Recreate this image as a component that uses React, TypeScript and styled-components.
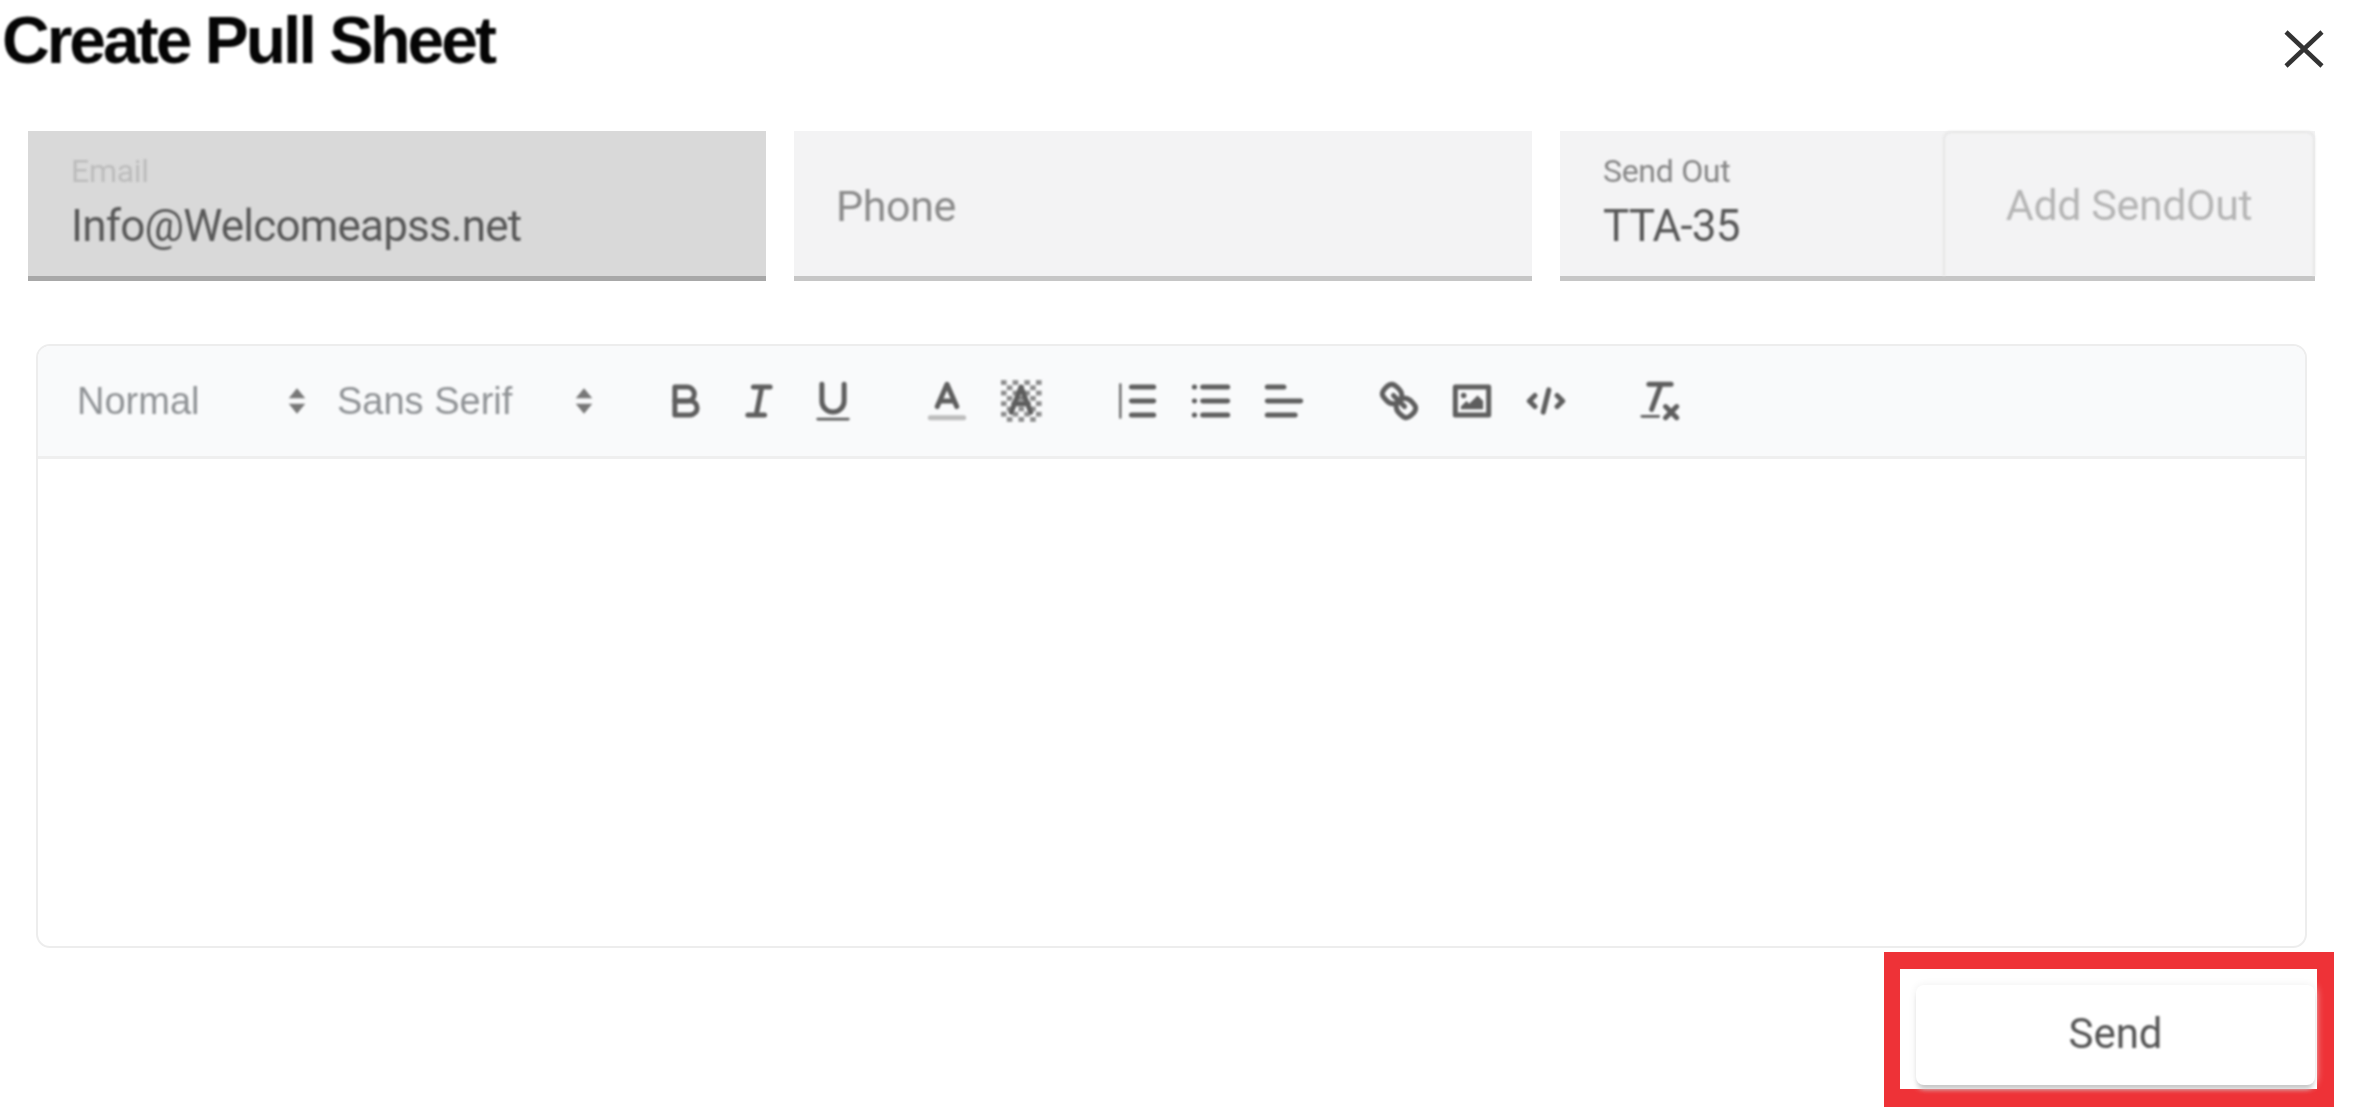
import styled, { createGlobalStyle } from 'styled-components';

const GlobalStyle = createGlobalStyle`
  html, body {
    margin: 0;
    padding: 0;
    background: #fff;
  }
`;

const Page = styled.div`
  width: 2359px;
  height: 1107px;
  overflow: hidden;
  background: #fff;
  font-family: Roboto, sans-serif;
`;

const Header = styled.div`
  height: 131px;
  display: flex;
  justify-content: space-between;
  align-items: flex-start;
  padding: 0 35px 0 2px;
  box-sizing: border-box;
`;

const Title = styled.h1`
  margin: 6px 0 0;
  font-family: 'Liberation Sans', Arial, sans-serif;
  font-size: 66px;
  line-height: 68px;
  letter-spacing: -3px;
  font-weight: 700;
  color: #050505;
  filter: blur(0.9px);
`;

const CloseButton = styled.div`
  margin-top: 30px;
  width: 40px;
  height: 38px;
  color: #333;
  filter: blur(0.7px);
`;

const FieldRow = styled.div`
  display: flex;
  gap: 28px;
  padding-left: 28px;
`;

const Field = styled.div<{ $width: number; $disabled?: boolean }>`
  width: ${(p) => p.$width}px;
  height: 150px;
  box-sizing: border-box;
  display: flex;
  background: ${(p) => (p.$disabled ? '#d9d9d9' : '#f3f3f4')};
  border-bottom: 5px solid ${(p) => (p.$disabled ? '#a8a8a8' : '#c6c6c6')};
`;

const FieldBody = styled.div<{ $inset: number }>`
  flex: 1;
  min-width: 0;
  display: flex;
  flex-direction: column;
  justify-content: center;
  padding-left: ${(p) => p.$inset}px;
  filter: blur(1px);
`;

const FieldLabel = styled.div<{ $faded?: boolean }>`
  font-size: 32px;
  line-height: 36px;
  margin-top: -4px;
  letter-spacing: -0.3px;
  color: ${(p) => (p.$faded ? '#bcbcbc' : '#858585')};
`;

const FieldValue = styled.div`
  font-size: 44px;
  line-height: 50px;
  margin-top: 12px;
  letter-spacing: -0.8px;
  color: #585858;
`;

const Placeholder = styled.div`
  font-size: 43px;
  line-height: 50px;
  margin-top: 4px;
  letter-spacing: -0.4px;
  color: #8b8b8b;
`;

const AddButton = styled.div`
  width: 372px;
  box-sizing: border-box;
  border: 2px solid #e6e6e6;
  border-bottom: none;
  border-radius: 8px 8px 0 0;
  display: flex;
  align-items: center;
  justify-content: center;
  font-size: 43px;
  letter-spacing: -0.4px;
  color: #b5b5b5;
  filter: blur(0.9px);
`;

const Editor = styled.div`
  width: 2271px;
  height: 604px;
  margin: 63px 0 0 36px;
  box-sizing: border-box;
  border: 2px solid #ededed;
  border-radius: 14px;
  overflow: hidden;
`;

const Toolbar = styled.div`
  height: 113px;
  box-sizing: border-box;
  display: flex;
  align-items: center;
  padding-left: 39px;
  background: #f9fafb;
  border-bottom: 3px solid #efefef;
  color: #666;
`;

const Picker = styled.div<{ $width: number; $after: number }>`
  width: ${(p) => p.$width}px;
  margin-right: ${(p) => p.$after}px;
  display: flex;
  justify-content: space-between;
  align-items: center;
  font-family: 'Liberation Sans', Arial, sans-serif;
  font-size: 38px;
  color: #8f9295;
  filter: blur(1px);

  svg {
    width: 22px;
    height: 30px;
    color: #777;
  }
`;

const Group = styled.div<{ $after?: number }>`
  display: flex;
  margin-right: ${(p) => p.$after ?? 43}px;
  filter: blur(1.1px);
`;

const ToolButton = styled.div`
  width: 73.5px;
  height: 73px;
  display: flex;
  align-items: center;
  justify-content: center;

  svg {
    width: 50px;
    height: 50px;
    fill: none;
    stroke: #5e5e5e;
    stroke-width: 1.8;
    stroke-linecap: round;
    stroke-linejoin: round;
  }
  .fill {
    fill: #5e5e5e;
    stroke: none;
  }
  .faint {
    stroke: #bdbdbd;
  }
`;

const Footer = styled.div`
  display: flex;
  justify-content: flex-end;
  margin-top: 4px;
  padding-right: 25px;
`;

const Highlight = styled.div`
  width: 450px;
  height: 155px;
  box-sizing: border-box;
  border: solid #ee3237;
  border-width: 17px 17px 18px 16px;
  display: flex;
  justify-content: flex-end;
  align-items: flex-end;
`;

const SendButton = styled.div`
  width: 399px;
  height: 100px;
  margin-right: 2px;
  margin-bottom: 4px;
  box-sizing: border-box;
  display: flex;
  align-items: center;
  justify-content: center;
  padding-bottom: 3px;
  background: #fff;
  border-radius: 8px;
  box-shadow: 0 6px 5px -2px #c6c6c6, 0 0 8px #efefef;
  font-size: 42px;
  color: #555;

  span {
    filter: blur(0.9px);
  }
`;

const PickerArrows = () => (
  <svg viewBox="0 0 12 16">
    <path d="M6 1 10.5 6.5H1.5Z M6 15 1.5 9.5H10.5Z" fill="currentColor" />
  </svg>
);

// the background-colour swatch in the toolbar is a speckled block behind the letter
const speckles = Array.from({ length: 56 }, (_, i) => {
  const col = i % 7;
  const row = Math.floor(i / 7);
  return { x: 1.8 + col * 2.1, y: 1.5 + row * 1.9, on: (col + row) % 2 === 0 };
});

const App = () => {
  return (
    <Page>
      <GlobalStyle />
      <Header>
        <Title>Create Pull Sheet</Title>
        <CloseButton>
          <svg width="40" height="38" viewBox="0 0 40 38">
            <path d="M2 2 38 36 M38 2 2 36" stroke="currentColor" strokeWidth="4.5" fill="none" />
          </svg>
        </CloseButton>
      </Header>

      <FieldRow>
        <Field $width={738} $disabled>
          <FieldBody $inset={43}>
            <FieldLabel $faded>Email</FieldLabel>
            <FieldValue>Info@Welcomeapss.net</FieldValue>
          </FieldBody>
        </Field>
        <Field $width={738}>
          <FieldBody $inset={42}>
            <Placeholder>Phone</Placeholder>
          </FieldBody>
        </Field>
        <Field $width={755}>
          <FieldBody $inset={43}>
            <FieldLabel>Send Out</FieldLabel>
            <FieldValue>TTA-35</FieldValue>
          </FieldBody>
          <AddButton>Add SendOut</AddButton>
        </Field>
      </FieldRow>

      <Editor>
        <Toolbar>
          <Picker $width={231} $after={29}>
            Normal
            <PickerArrows />
          </Picker>
          <Picker $width={258} $after={54}>
            Sans Serif
            <PickerArrows />
          </Picker>
          <Group $after={41}>
            <ToolButton>
              <svg viewBox="0 0 18 18">
                <path d="M5,4H9.5A2.5,2.5,0,0,1,12,6.5v0A2.5,2.5,0,0,1,9.5,9H5V4Z" />
                <path d="M5,9h5.5A2.5,2.5,0,0,1,13,11.5v0A2.5,2.5,0,0,1,10.5,14H5V9Z" />
              </svg>
            </ToolButton>
            <ToolButton>
              <svg viewBox="0 0 18 18">
                <path d="M7 4H13 M5 14H11 M8 14 10 4" />
              </svg>
            </ToolButton>
            <ToolButton>
              <svg viewBox="0 0 18 18">
                <path d="M5,3V9a4,4,0,0,0,4,4H9a4,4,0,0,0,4-4V3" />
                <rect className="fill" height="1" rx=".5" ry=".5" width="12" x="3" y="15" />
              </svg>
            </ToolButton>
          </Group>
          <Group>
            <ToolButton>
              <svg viewBox="0 0 18 18">
                <path className="faint" d="M3 15H15" />
                <path d="M5.5 11 9 3 12.5 11 M11.63 9H6.38" />
              </svg>
            </ToolButton>
            <ToolButton>
              <svg viewBox="0 0 18 18">
                {speckles.map((s) =>
                  s.on ? (
                    <rect key={`${s.x}-${s.y}`} className="fill" x={s.x} y={s.y} width="2" height="1.7" opacity="0.7" />
                  ) : null,
                )}
                <path d="M5.5 13 9 4 12.5 13 M11.63 10H6.38" />
              </svg>
            </ToolButton>
          </Group>
          <Group $after={41}>
            <ToolButton>
              <svg viewBox="0 0 18 18">
                <path d="M7 4H15 M7 9H15 M7 14H15" />
                <path d="M3 3V15" strokeWidth="0.8" />
              </svg>
            </ToolButton>
            <ToolButton>
              <svg viewBox="0 0 18 18">
                <path d="M6 4H15 M6 9H15 M6 14H15 M3 4H3.1 M3 9H3.1 M3 14H3.1" />
              </svg>
            </ToolButton>
            <ToolButton>
              <svg viewBox="0 0 18 18">
                <path d="M3 9H15 M3 14H13 M3 4H9" />
              </svg>
            </ToolButton>
          </Group>
          <Group $after={41}>
            <ToolButton>
              <svg viewBox="0 0 18 18">
                <path d="M7 7 11 11" />
                <path d="M8.9,4.577a3.476,3.476,0,0,1,.36,4.679A3.476,3.476,0,0,1,4.577,8.9C3.185,7.5,2.035,6.4,4.217,4.217S7.5,3.185,8.9,4.577Z" />
                <path d="M13.423,9.1a3.476,3.476,0,0,0-4.679-.36,3.476,3.476,0,0,0,.36,4.679c1.392,1.392,2.5,2.542,4.679.36S14.815,10.5,13.423,9.1Z" />
              </svg>
            </ToolButton>
            <ToolButton>
              <svg viewBox="0 0 18 18">
                <rect height="10" width="12" x="3" y="4" />
                <circle className="fill" cx="6" cy="7" r="1" />
                <polygon className="fill" points="5 12 5 11 7 9 8 10 11 7 13 9 13 12 5 12" />
              </svg>
            </ToolButton>
            <ToolButton>
              <svg viewBox="0 0 18 18">
                <path d="M5 7 3 9 5 11 M13 7 15 9 13 11 M10 5 8 13" />
              </svg>
            </ToolButton>
          </Group>
          <Group>
            <ToolButton>
              <svg viewBox="0 0 18 18">
                <path d="M5 3H13 M6 12 9.35 3 M11 11 15 15 M15 11 11 15" />
                <rect className="fill" height="1" rx=".5" ry=".5" width="7" x="2" y="14" />
              </svg>
            </ToolButton>
          </Group>
        </Toolbar>
      </Editor>

      <Footer>
        <Highlight>
          <SendButton>
            <span>Send</span>
          </SendButton>
        </Highlight>
      </Footer>
    </Page>
  );
};

export default App;
